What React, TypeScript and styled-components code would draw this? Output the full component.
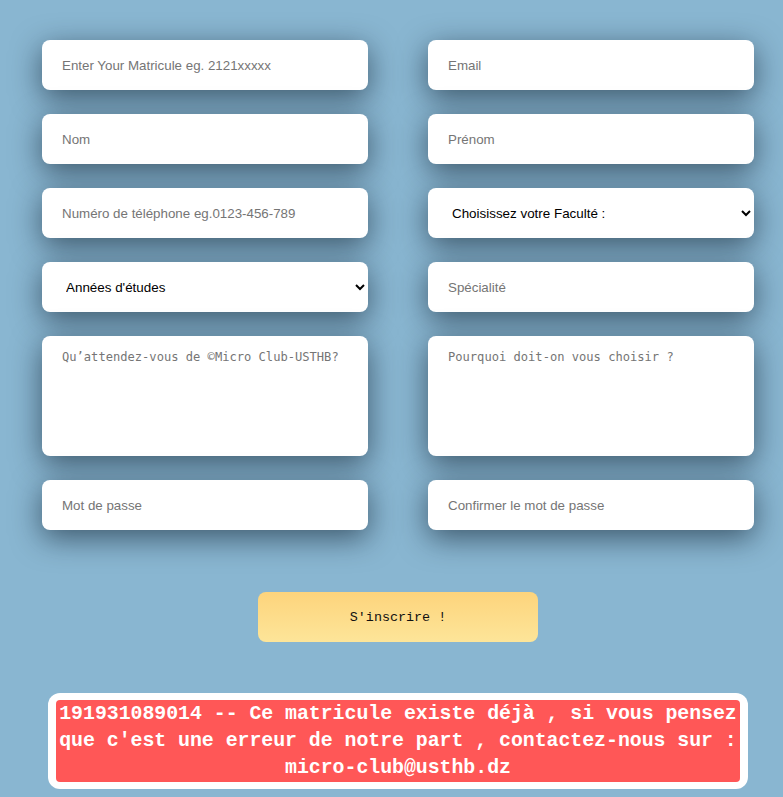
import React from "react";
import styled, { createGlobalStyle } from "styled-components";

const Global = createGlobalStyle`
  html, body { margin: 0; padding: 0; }
  body { background: #89b6d1; overflow: hidden; }
`;

const Page = styled.main`
  width: 796px;
  padding: 40px 0 8px;
  display: flex;
  flex-direction: column;
  align-items: center;
`;

const Grid = styled.form`
  display: grid;
  grid-template-columns: 326px 326px;
  column-gap: 60px;
  row-gap: 24px;
`;

const fieldBase = `
  box-sizing: border-box;
  width: 326px;
  border: none;
  outline: none;
  background: #ffffff;
  border-radius: 8px;
  box-shadow: 0 8px 30px rgba(10, 25, 40, 0.6);
  color: #000;
`;

const Input = styled.input`
  ${fieldBase}
  height: 50px;
  padding: 0 20px;
  font-family: "Liberation Sans", Arial, sans-serif;
  font-size: 13.33px;
  &::placeholder { color: #757575; }
`;

const Select = styled.select`
  ${fieldBase}
  height: 50px;
  padding: 0 0 0 20px;
  font-family: "Liberation Sans", Arial, sans-serif;
  font-size: 13.4px;
`;

const Area = styled.textarea`
  ${fieldBase}
  height: 120px;
  padding: 14px 20px;
  resize: none;
  font-family: "DejaVu Sans Mono", monospace;
  font-size: 12.1px;
  &::placeholder { color: #757575; }
`;

const Submit = styled.button`
  margin-top: 62px;
  width: 280px;
  height: 50px;
  border: none;
  border-radius: 8px;
  background: linear-gradient(180deg, #fdd47c 0%, #fde599 100%);
  font-family: "Liberation Mono", monospace;
  font-size: 13.4px;
  color: #111;
`;

const Alert = styled.div`
  box-sizing: border-box;
  margin-top: 51px;
  width: 700px;
  padding: 7px 8px;
  background: #ffffff;
  border-radius: 12px;
`;

const AlertInner = styled.p`
  margin: 0;
  background: #ff5757;
  border-radius: 4px;
  color: #fff;
  font-family: "Liberation Mono", monospace;
  font-weight: bold;
  font-size: 19.9px;
  letter-spacing: -0.05px;
  line-height: 27px;
  text-align: center;
  padding: 0 0 1px;
`;

export default function App() {
  return (
    <>
      <Global />
      <Page>
        <Grid>
          <Input placeholder="Enter Your Matricule eg. 2121xxxxx" />
          <Input placeholder="Email" />
          <Input placeholder="Nom" />
          <Input placeholder="Prénom" />
          <Input placeholder="Numéro de téléphone eg.0123-456-789" />
          <Select defaultValue="f">
            <option value="f">Choisissez votre Faculté :</option>
          </Select>
          <Select defaultValue="a">
            <option value="a">Années d'études</option>
          </Select>
          <Input placeholder="Spécialité" />
          <Area placeholder="Qu’attendez-vous de ©Micro Club-USTHB?" />
          <Area placeholder="Pourquoi doit-on vous choisir ?" />
          <Input type="password" placeholder="Mot de passe" />
          <Input type="password" placeholder="Confirmer le mot de passe" />
        </Grid>
        <Submit type="button">S'inscrire !</Submit>
        <Alert>
          <AlertInner>
            191931089014 -- Ce matricule existe déjà , si vous pensez que c'est une erreur de notre part , contactez-nous sur : micro-club@usthb.dz
          </AlertInner>
        </Alert>
      </Page>
    </>
  );
}
